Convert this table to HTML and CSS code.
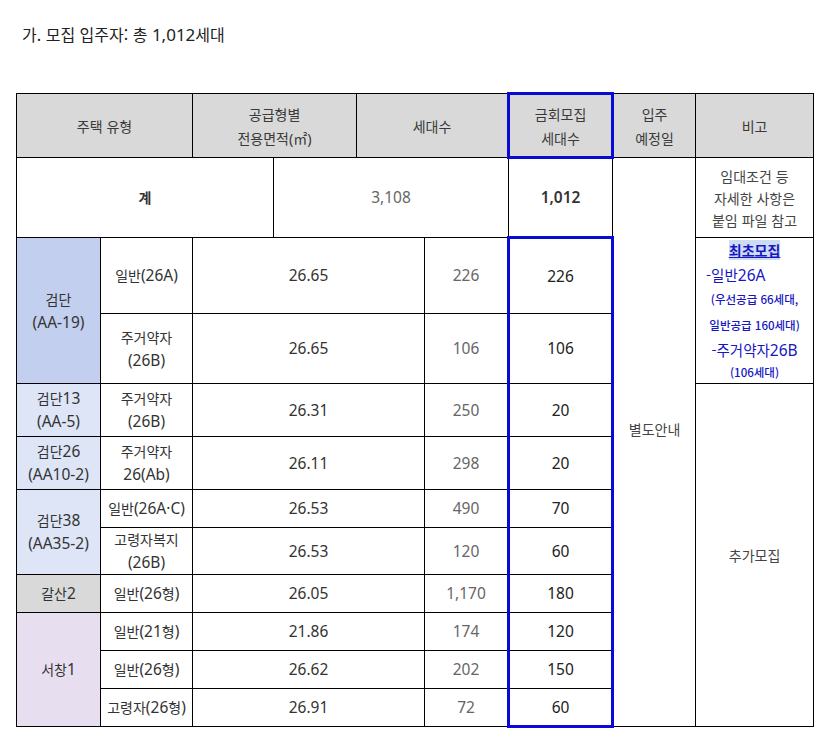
FILE: index.html
```html
<!DOCTYPE html>
<html lang="ko">
<head>
<meta charset="utf-8">
<title>모집 입주자</title>
<link rel="stylesheet" href="styles.css">
</head>
<body>
<h2 class="title">가. 모집 입주자: 총 <span class="en">1,012</span>세대</h2>
<table class="supply">
  <colgroup>
    <col class="c0"><col class="c1"><col class="c2"><col class="c3"><col class="c4"><col class="c5"><col class="c6"><col class="c7"><col class="c8">
  </colgroup>
  <thead>
    <tr class="r-head">
      <th colspan="2">주택 유형</th>
      <th colspan="2">공급형별<br>전용면적<span class="en">(</span>㎡<span class="en">)</span></th>
      <th colspan="2">세대수</th>
      <th class="hl-head">금회모집<br>세대수</th>
      <th>입주<br>예정일</th>
      <th>비고</th>
    </tr>
  </thead>
  <tbody>
    <tr class="r-total">
      <td colspan="3" class="strong">계</td>
      <td colspan="3" class="num n">3,108</td>
      <td class="strong n">1,012</td>
      <td rowspan="11" class="move">별도안내</td>
      <td class="note">임대조건 등<br>자세한 사항은<br>붙임 파일 참고</td>
    </tr>
    <tr class="r76">
      <td rowspan="2" class="site site-a">검단<br><span class="en">(AA-19)</span></td>
      <td>일반<span class="en">(26A)</span></td>
      <td colspan="3" class="n">26.65</td>
      <td class="num n">226</td>
      <td class="hl hl-top n">226</td>
      <td rowspan="2" class="first">
        <div class="f-title"><span>최초모집</span></div>
        <div class="f-big f-left">-일반<span class="en">26A</span></div>
        <div class="f-small">(우선공급 66세대,</div>
        <div class="f-small">일반공급 160세대)</div>
        <div class="f-big">-주거약자<span class="en">26B</span></div>
        <div class="f-small f-last">(106세대)</div>
      </td>
    </tr>
    <tr class="r69">
      <td>주거약자<br><span class="en">(26B)</span></td>
      <td colspan="3" class="n">26.65</td>
      <td class="num n">106</td>
      <td class="hl n">106</td>
    </tr>
    <tr class="r53">
      <td class="site site-b">검단<span class="en">13</span><br><span class="en">(AA-5)</span></td>
      <td>주거약자<br><span class="en">(26B)</span></td>
      <td colspan="3" class="n">26.31</td>
      <td class="num n">250</td>
      <td class="hl n">20</td>
      <td rowspan="8" class="extra">추가모집</td>
    </tr>
    <tr class="r53">
      <td class="site site-b">검단<span class="en">26</span><br><span class="en">(AA10-2)</span></td>
      <td>주거약자<br><span class="en">26(Ab)</span></td>
      <td colspan="3" class="n">26.11</td>
      <td class="num n">298</td>
      <td class="hl n">20</td>
    </tr>
    <tr class="r38">
      <td rowspan="2" class="site site-b">검단<span class="en">38</span><br><span class="en">(AA35-2)</span></td>
      <td>일반<span class="en">(26A·C)</span></td>
      <td colspan="3" class="n">26.53</td>
      <td class="num n">490</td>
      <td class="hl n">70</td>
    </tr>
    <tr class="r46">
      <td>고령자복지<br><span class="en">(26B)</span></td>
      <td colspan="3" class="n">26.53</td>
      <td class="num n">120</td>
      <td class="hl n">60</td>
    </tr>
    <tr class="r38">
      <td class="site site-c">갈산<span class="en">2</span></td>
      <td>일반<span class="en">(26</span>형<span class="en">)</span></td>
      <td colspan="3" class="n">26.05</td>
      <td class="num n">1,170</td>
      <td class="hl n">180</td>
    </tr>
    <tr class="r38">
      <td rowspan="3" class="site site-d">서창<span class="en">1</span></td>
      <td>일반<span class="en">(21</span>형<span class="en">)</span></td>
      <td colspan="3" class="n">21.86</td>
      <td class="num n">174</td>
      <td class="hl n">120</td>
    </tr>
    <tr class="r38">
      <td>일반<span class="en">(26</span>형<span class="en">)</span></td>
      <td colspan="3" class="n">26.62</td>
      <td class="num n">202</td>
      <td class="hl n">150</td>
    </tr>
    <tr class="r38">
      <td>고령자<span class="en">(26</span>형<span class="en">)</span></td>
      <td colspan="3" class="n">26.91</td>
      <td class="num n">72</td>
      <td class="hl hl-bottom n">60</td>
    </tr>
  </tbody>
</table>
</body>
</html>
```

FILE: styles.css
```css
html, body {
  margin: 0;
  padding: 0;
  background: #fff;
}

body {
  font-family: "Noto Sans CJK KR", "Noto Sans", sans-serif;
  color: #333;
}

.en {
  font-family: "Noto Sans", "Noto Sans CJK KR", sans-serif;
  font-size: 15.5px;
  line-height: 1;
}

.title {
  margin: 23px 0 47px 22px;
  font-size: 16px;
  line-height: 22px;
  font-weight: normal;
  color: #222;
}

.title .en {
  font-size: 17px;
}

.supply {
  margin-left: 16px;
  width: 797px;
  border-collapse: collapse;
  table-layout: fixed;
  font-size: 14px;
  line-height: 23px;
}

.c0 { width: 84px; }
.c1 { width: 92px; }
.c2 { width: 81px; }
.c3 { width: 83px; }
.c4 { width: 68px; }
.c5 { width: 84px; }
.c6 { width: 104px; }
.c7 { width: 83px; }
.c8 { width: 118px; }

.supply th,
.supply td {
  border: 1px solid #000;
  padding: 0;
  text-align: center;
  vertical-align: middle;
  color: #333;
  white-space: nowrap;
}

.supply th {
  background: #d9d9d9;
  font-weight: normal;
  line-height: 24px;
  color: #3a3a3a;
}

.supply th .en {
  font-size: 14.5px;
}

.supply td.n {
  font-family: "Noto Sans", "Noto Sans CJK KR", sans-serif;
  font-size: 15.5px;
}

.r-head { height: 64px; }
.r-total { height: 80px; }
.r76 { height: 75px; }
.r69 { height: 69px; }
.r53 { height: 53px; }
.r46 { height: 45px; }
.r38 { height: 38px; }

.supply .strong {
  font-weight: bold;
  color: #333;
}

.supply td.strong.n {
  font-weight: 600;
}

.supply .num {
  color: #666;
}

.supply .hl {
  border-left: 3px solid #0a0ad8;
  border-right: 3px solid #0a0ad8;
  color: #222;
}

.supply .hl-top { border-top: 3px solid #0a0ad8; }
.supply .hl-bottom { border-bottom: 3px solid #0a0ad8; }

.supply .hl-head {
  border: 3px solid #0a0ad8;
}

.supply .move {
  padding-bottom: 26px;
  color: #444;
}

.supply .note {
  line-height: 22px;
  color: #444;
}

.supply .extra {
  color: #444;
}

.site-a { background: #c3cfee; }
.site-b { background: #dde5f6; }
.site-c { background: #d9d9d9; }
.site-d { background: #e7dff0; }

.supply .first {
  color: #1616c2;
  vertical-align: top;
}

.f-title {
  line-height: 25px;
  font-weight: bold;
}

.f-title span {
  background: #cddbf3;
  text-decoration: underline;
  color: #1616c2;
}

.f-big {
  font-size: 14.5px;
  line-height: 23px;
}

.f-big .en {
  font-size: 15.5px;
}

.f-left {
  text-align: left;
  padding-left: 10px;
}

.f-small {
  font-size: 11.5px;
  line-height: 26px;
  font-weight: 500;
}

.f-last {
  line-height: 22px;
}
```
